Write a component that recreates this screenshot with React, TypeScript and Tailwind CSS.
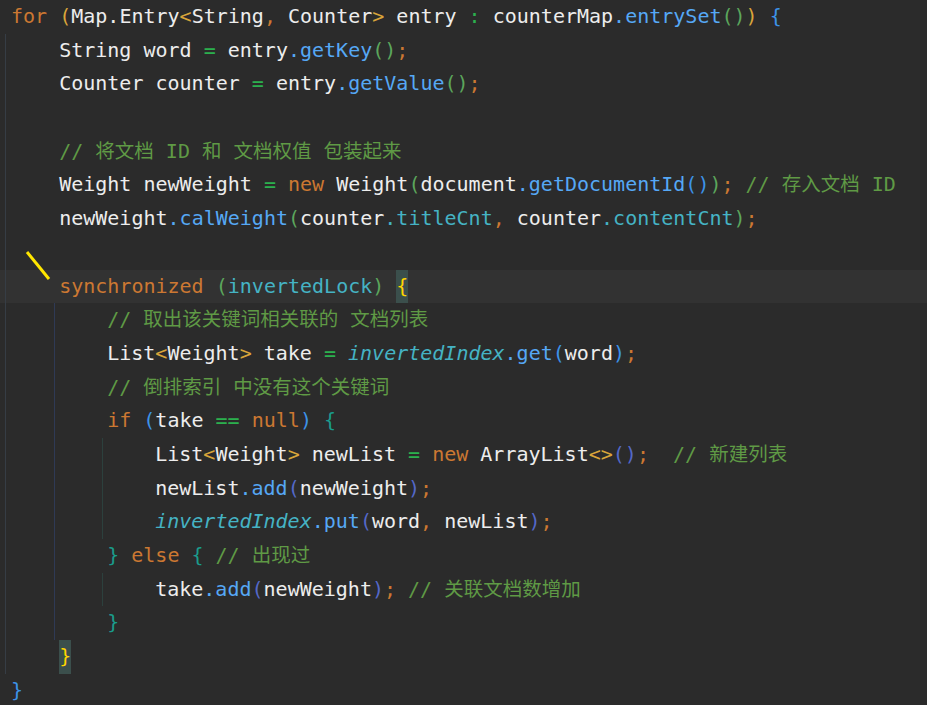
import React from "react";

type Tok = [string, string];

const D = "text-[#ededed]";
const K = "text-[#cc7832]";
const CM = "text-[#5f9a45]";
const M = "text-[#56a8f5]";
const F = "text-[#45b3c4]";
const FI = "text-[#45b3c4] italic";
const OP = "text-[#2bb04e]";
const GOLD = "text-[#d9a53a]";
const GREEN = "text-[#5ca65c]";
const BLUE = "text-[#3d93e8]";
const TEAL = "text-[#1a9c8c]";
const INDIGO = "text-[#5468c8]";
const YEL = "text-[#ffd500] bg-[#3b4f4c] inline-block leading-[33.7px]";

const i1 = "    ";

function renderText(text: string) {
  const parts = text.split(/([\u4e00-\u9fff]+)/);
  return parts.map((p, i) =>
    /[\u4e00-\u9fff]/.test(p) ? (
      <span key={i} className="text-[19.5px]">
        {p}
      </span>
    ) : (
      <React.Fragment key={i}>{p}</React.Fragment>
    )
  );
}

function Line({ toks, className }: { toks: Tok[]; className: string }) {
  return (
    <div className={"h-[33.7px] leading-[33.7px] whitespace-pre " + className}>
      {toks.map(([cls, text], ti) => (
        <span key={ti} className={cls}>
          {renderText(text)}
        </span>
      ))}
    </div>
  );
}

export default function App() {
  return (
    <div
      className="relative w-[927px] h-[705px] overflow-hidden bg-[#2b2b2b] text-[20px]"
      style={{ fontFamily: "'DejaVu Sans Mono', 'Noto Sans CJK SC', monospace" }}
    >
      <div className="flex flex-col">
        <Line
          className="pl-[11px]"
          toks={[
            [K, "for"], [D, " "], [GOLD, "("], [D, "Map.Entry"], [GOLD, "<"], [D, "String"], [K, ","],
            [D, " Counter"], [GOLD, ">"], [D, " entry "], [OP, ":"], [D, " counterMap"], [M, ".entrySet"],
            [GREEN, "()"], [GOLD, ")"], [D, " "], [BLUE, "{"],
          ]}
        />
        {/* for body */}
        <div className="ml-[5px] flex flex-col border-l border-[#363d45]">
          <Line className="pl-[5px]" toks={[[D, i1 + "String word "], [OP, "="], [D, " entry"], [M, ".getKey"], [GREEN, "()"], [K, ";"]]} />
          <Line className="pl-[5px]" toks={[[D, i1 + "Counter counter "], [OP, "="], [D, " entry"], [M, ".getValue"], [GREEN, "()"], [K, ";"]]} />
          <Line className="pl-[5px]" toks={[]} />
          <Line className="pl-[5px]" toks={[[D, i1], [CM, "// 将文档 ID 和 文档权值 包装起来"]]} />
          <Line
            className="pl-[5px]"
            toks={[
              [D, i1 + "Weight newWeight "], [OP, "="], [D, " "], [K, "new"], [D, " Weight"], [GREEN, "("],
              [D, "document"], [M, ".getDocumentId"], [BLUE, "()"], [GREEN, ")"], [K, ";"], [D, " "],
              [CM, "// 存入文档 ID"],
            ]}
          />
          <Line
            className="pl-[5px]"
            toks={[
              [D, i1 + "newWeight"], [M, ".calWeight"], [GREEN, "("], [D, "counter"], [F, ".titleCnt"], [K, ","],
              [D, " counter"], [F, ".contentCnt"], [GREEN, ")"], [K, ";"],
            ]}
          />
          <Line className="pl-[5px]" toks={[]} />
          <Line
            className="pl-[5px] relative bg-[#323232] before:content-[''] before:absolute before:left-[-6px] before:top-0 before:h-full before:w-[5px] before:bg-[#323232]"
            toks={[[D, i1], [K, "synchronized"], [D, " "], [GREEN, "("], [F, "invertedLock"], [GREEN, ")"], [D, " "], [YEL, "{"]]}
          />
          {/* synchronized body */}
          <div className="ml-[48px] flex flex-col border-l border-[#2f3a55]">
            <Line className="pl-[4px]" toks={[[D, i1], [CM, "// 取出该关键词相关联的 文档列表"]]} />
            <Line
              className="pl-[4px]"
              toks={[
                [D, i1 + "List"], [GOLD, "<"], [D, "Weight"], [GOLD, ">"], [D, " take "], [OP, "="], [D, " "],
                [FI, "invertedIndex"], [M, ".get"], [BLUE, "("], [D, "word"], [BLUE, ")"], [K, ";"],
              ]}
            />
            <Line className="pl-[4px]" toks={[[D, i1], [CM, "// 倒排索引 中没有这个关键词"]]} />
            <Line
              className="pl-[4px]"
              toks={[[D, i1], [K, "if"], [D, " "], [BLUE, "("], [D, "take "], [OP, "=="], [D, " "], [K, "null"], [BLUE, ")"], [D, " "], [TEAL, "{"]]}
            />
            {/* if body */}
            <div className="ml-[47px] flex flex-col border-l border-[#2c403d]">
              <Line
                className="pl-[4px]"
                toks={[
                  [D, i1 + "List"], [GOLD, "<"], [D, "Weight"], [GOLD, ">"], [D, " newList "], [OP, "="], [D, " "],
                  [K, "new"], [D, " ArrayList"], [GOLD, "<>"], [INDIGO, "()"], [K, ";"], [D, "  "], [CM, "// 新建列表"],
                ]}
              />
              <Line className="pl-[4px]" toks={[[D, i1 + "newList"], [M, ".add"], [INDIGO, "("], [D, "newWeight"], [INDIGO, ")"], [K, ";"]]} />
              <Line
                className="pl-[4px]"
                toks={[[D, i1], [FI, "invertedIndex"], [M, ".put"], [INDIGO, "("], [D, "word"], [K, ","], [D, " newList"], [INDIGO, ")"], [K, ";"]]}
              />
            </div>
            <Line
              className="pl-[4px]"
              toks={[[D, i1], [TEAL, "}"], [D, " "], [K, "else"], [D, " "], [TEAL, "{"], [D, " "], [CM, "// 出现过"]]}
            />
            {/* else body */}
            <div className="ml-[47px] flex flex-col border-l border-[#2c403d]">
              <Line
                className="pl-[4px]"
                toks={[[D, i1 + "take"], [M, ".add"], [INDIGO, "("], [D, "newWeight"], [INDIGO, ")"], [K, ";"], [D, " "], [CM, "// 关联文档数增加"]]}
              />
            </div>
            <Line className="pl-[4px]" toks={[[D, i1], [TEAL, "}"]]} />
          </div>
          <Line className="pl-[5px]" toks={[[D, i1], [YEL, "}"]]} />
        </div>
        <Line className="pl-[11px]" toks={[[BLUE, "}"]]} />
      </div>

      {/* yellow annotation stroke */}
      <svg className="absolute left-0 top-[245px]" width="60" height="45" viewBox="0 0 60 45">
        <line x1="27" y1="7" x2="49" y2="34" stroke="#ffe600" strokeWidth="3" strokeLinecap="butt" />
      </svg>
    </div>
  );
}
